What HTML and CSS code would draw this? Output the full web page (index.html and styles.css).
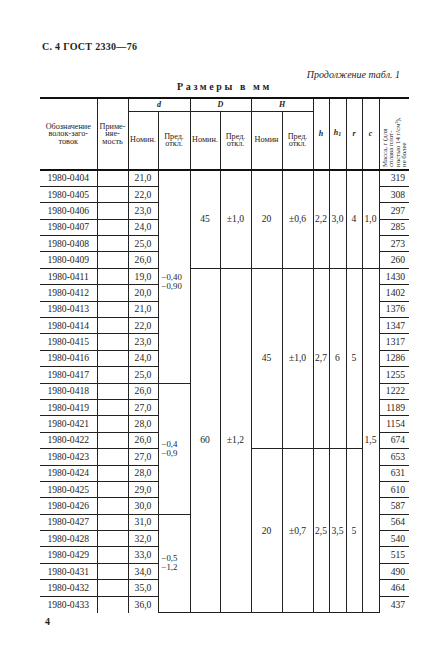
FILE: index.html
```html
<!DOCTYPE html>
<html lang="ru">
<head>
<meta charset="utf-8">
<title>ГОСТ 2330—76</title>
<link rel="stylesheet" href="styles.css">
</head>
<body>
<div class="page">
  <div class="doc-title">С. 4 ГОСТ 2330—76</div>
  <div class="cont">Продолжение табл. 1</div>
  <div class="caption">Размеры в мм</div>
  <table class="gost">
    <colgroup>
      <col class="c-des"><col class="c-app"><col class="c-dn"><col class="c-dp">
      <col class="c-Dn"><col class="c-Dp"><col class="c-Hn"><col class="c-Hp">
      <col class="c-h"><col class="c-h1"><col class="c-r"><col class="c-c"><col class="c-m">
    </colgroup>
    <thead>
      <tr class="hr1">
        <th rowspan="2" class="nl">Обозначение<br>волок-заго-<br>товок</th>
        <th rowspan="2">Приме-<br>няе-<br>мость</th>
        <th colspan="2" class="sym">d</th>
        <th colspan="2" class="sym">D</th>
        <th colspan="2" class="sym">H</th>
        <th rowspan="2" class="sym">h</th>
        <th rowspan="2" class="sym">h<sub>1</sub></th>
        <th rowspan="2" class="sym">r</th>
        <th rowspan="2" class="sym">c</th>
        <th rowspan="2" class="nr mass"><div class="vert">Масса, г (для<br>сплава плот-<br>ностью 14 г/см³),<br>не более</div></th>
      </tr>
      <tr class="hr2">
        <th>Номин.</th><th>Пред.<br>откл.</th>
        <th>Номин.</th><th>Пред.<br>откл.</th>
        <th>Номин</th><th>Пред.<br>откл.</th>
      </tr>
    </thead>
    <tbody>
      <tr><td class="nl des">1980-0404</td><td></td><td class="num">21,0</td>
        <td rowspan="13" class="dev top">−0,40<br>−0,90</td>
        <td rowspan="6" class="mid">45</td><td rowspan="6" class="mid">±1,0</td>
        <td rowspan="6" class="mid">20</td><td rowspan="6" class="mid">±0,6</td>
        <td rowspan="6" class="mid">2,2</td><td rowspan="6" class="mid">3,0</td>
        <td rowspan="6" class="mid">4</td><td rowspan="6" class="mid">1,0</td>
        <td class="nr mv">319</td></tr>
      <tr><td class="nl des">1980-0405</td><td></td><td class="num">22,0</td><td class="nr mv">308</td></tr>
      <tr><td class="nl des">1980-0406</td><td></td><td class="num">23,0</td><td class="nr mv">297</td></tr>
      <tr><td class="nl des">1980-0407</td><td></td><td class="num">24,0</td><td class="nr mv">285</td></tr>
      <tr><td class="nl des">1980-0408</td><td></td><td class="num">25,0</td><td class="nr mv">273</td></tr>
      <tr><td class="nl des">1980-0409</td><td></td><td class="num">26,0</td><td class="nr mv">260</td></tr>
      <tr><td class="nl des">1980-0411</td><td></td><td class="num">19,0</td>
        <td rowspan="21" class="mid">60</td><td rowspan="21" class="mid">±1,2</td>
        <td rowspan="11" class="mid">45</td><td rowspan="11" class="mid">±1,0</td>
        <td rowspan="11" class="mid">2,7</td><td rowspan="11" class="mid">6</td>
        <td rowspan="11" class="mid">5</td><td rowspan="21" class="mid">1,5</td>
        <td class="nr mv">1430</td></tr>
      <tr><td class="nl des">1980-0412</td><td></td><td class="num">20,0</td><td class="nr mv">1402</td></tr>
      <tr><td class="nl des">1980-0413</td><td></td><td class="num">21,0</td><td class="nr mv">1376</td></tr>
      <tr><td class="nl des">1980-0414</td><td></td><td class="num">22,0</td><td class="nr mv">1347</td></tr>
      <tr><td class="nl des">1980-0415</td><td></td><td class="num">23,0</td><td class="nr mv">1317</td></tr>
      <tr><td class="nl des">1980-0416</td><td></td><td class="num">24,0</td><td class="nr mv">1286</td></tr>
      <tr><td class="nl des">1980-0417</td><td></td><td class="num">25,0</td><td class="nr mv">1255</td></tr>
      <tr><td class="nl des">1980-0418</td><td></td><td class="num">26,0</td>
        <td rowspan="8" class="dev">−0,4<br>−0,9</td>
        <td class="nr mv">1222</td></tr>
      <tr><td class="nl des">1980-0419</td><td></td><td class="num">27,0</td><td class="nr mv">1189</td></tr>
      <tr><td class="nl des">1980-0421</td><td></td><td class="num">28,0</td><td class="nr mv">1154</td></tr>
      <tr><td class="nl des">1980-0422</td><td></td><td class="num">26,0</td><td class="nr mv">674</td></tr>
      <tr><td class="nl des">1980-0423</td><td></td><td class="num">27,0</td>
        <td rowspan="10" class="mid">20</td><td rowspan="10" class="mid">±0,7</td>
        <td rowspan="10" class="mid">2,5</td><td rowspan="10" class="mid">3,5</td>
        <td rowspan="10" class="mid">5</td>
        <td class="nr mv">653</td></tr>
      <tr><td class="nl des">1980-0424</td><td></td><td class="num">28,0</td><td class="nr mv">631</td></tr>
      <tr><td class="nl des">1980-0425</td><td></td><td class="num">29,0</td><td class="nr mv">610</td></tr>
      <tr><td class="nl des">1980-0426</td><td></td><td class="num">30,0</td><td class="nr mv">587</td></tr>
      <tr><td class="nl des">1980-0427</td><td></td><td class="num">31,0</td>
        <td rowspan="6" class="dev">−0,5<br>−1,2</td>
        <td class="nr mv">564</td></tr>
      <tr><td class="nl des">1980-0428</td><td></td><td class="num">32,0</td><td class="nr mv">540</td></tr>
      <tr><td class="nl des">1980-0429</td><td></td><td class="num">33,0</td><td class="nr mv">515</td></tr>
      <tr><td class="nl des">1980-0431</td><td></td><td class="num">34,0</td><td class="nr mv">490</td></tr>
      <tr><td class="nl des">1980-0432</td><td></td><td class="num">35,0</td><td class="nr mv">464</td></tr>
      <tr class="last"><td class="nl des">1980-0433</td><td></td><td class="num">36,0</td><td class="nr mv">437</td></tr>
    </tbody>
  </table>
  <div class="page-num">4</div>
</div>
</body>
</html>
```

FILE: styles.css
```css
html, body {
  margin: 0;
  padding: 0;
  background: #ffffff;
}
body {
  width: 436px;
  height: 655px;
  overflow: hidden;
  font-family: "Liberation Serif", "DejaVu Serif", serif;
  color: #1e1e1e;
}
.page {
  padding: 41px 27px 0 40px;
}
.doc-title {
  font-size: 10px;
  font-weight: bold;
  line-height: 12px;
  height: 12px;
  padding-left: 2px;
  letter-spacing: 0.3px;
}
.cont {
  margin-top: 16px;
  font-size: 10px;
  font-style: italic;
  line-height: 12px;
  height: 12px;
  text-align: right;
  padding-right: 9px;
}
.caption {
  font-size: 10px;
  font-weight: bold;
  line-height: 12px;
  height: 12px;
  text-align: center;
  letter-spacing: 2.6px;
  margin-bottom: 4px;
}
.gost {
  width: 369px;
  table-layout: fixed;
  border-collapse: collapse;
  border-top: 2px solid #111;
  font-size: 10px;
}
.c-des { width: 57px; }
.c-app { width: 31px; }
.c-dn { width: 30px; }
.c-dp { width: 32px; }
.c-Dn { width: 30px; }
.c-Dp { width: 31px; }
.c-Hn { width: 31px; }
.c-Hp { width: 31px; }
.c-h { width: 16px; }
.c-h1 { width: 17px; }
.c-r { width: 16px; }
.c-c { width: 17px; }
.c-m { width: 30px; }

.gost th, .gost td {
  border: 1px solid #222;
  padding: 0;
  overflow: hidden;
}
.gost th {
  font-weight: normal;
  font-size: 8.2px;
  line-height: 7.6px;
  vertical-align: middle;
  text-align: center;
}
.gost thead tr.hr1 { height: 13px; }
.gost thead tr.hr2 { height: 59px; }
.gost thead tr.hr2 th { border-bottom: 2px solid #111; }
.gost thead tr.hr1 th[rowspan] { border-bottom: 2px solid #111; }
.gost th.sym {
  font-style: italic;
  font-weight: bold;
  font-size: 8px;
}
.gost th.sym sub {
  font-size: 6px;
  vertical-align: -1px;
}
.gost .nl { border-left: none; }
.gost .nr { border-right: none; }
.vert {
  writing-mode: vertical-rl;
  transform: rotate(180deg);
  font-size: 6.8px;
  line-height: 6.3px;
  height: 66px;
  text-align: left;
  margin: 0 auto;
  white-space: nowrap;
}
.gost tbody tr { height: 16.4px; }
.gost td {
  text-align: center;
  vertical-align: middle;
  line-height: 10px;
  white-space: nowrap;
}
.gost td.des { font-size: 9.6px; }
.gost td.num { font-size: 9.6px; }
.gost td.mid { font-size: 9.6px; }
.gost td.dev {
  font-size: 8.8px;
  line-height: 9px;
  text-align: left;
  padding-left: 3px;
}
.gost td.dev.top { padding-top: 10px; }
.gost td.mv {
  text-align: right;
  padding-right: 4px;
  font-size: 9.6px;
}
.gost tbody tr.last td { border-bottom: none; }
.page-num {
  margin-top: 3px;
  padding-left: 5px;
  font-size: 10px;
  font-weight: bold;
  line-height: 12px;
}
```
